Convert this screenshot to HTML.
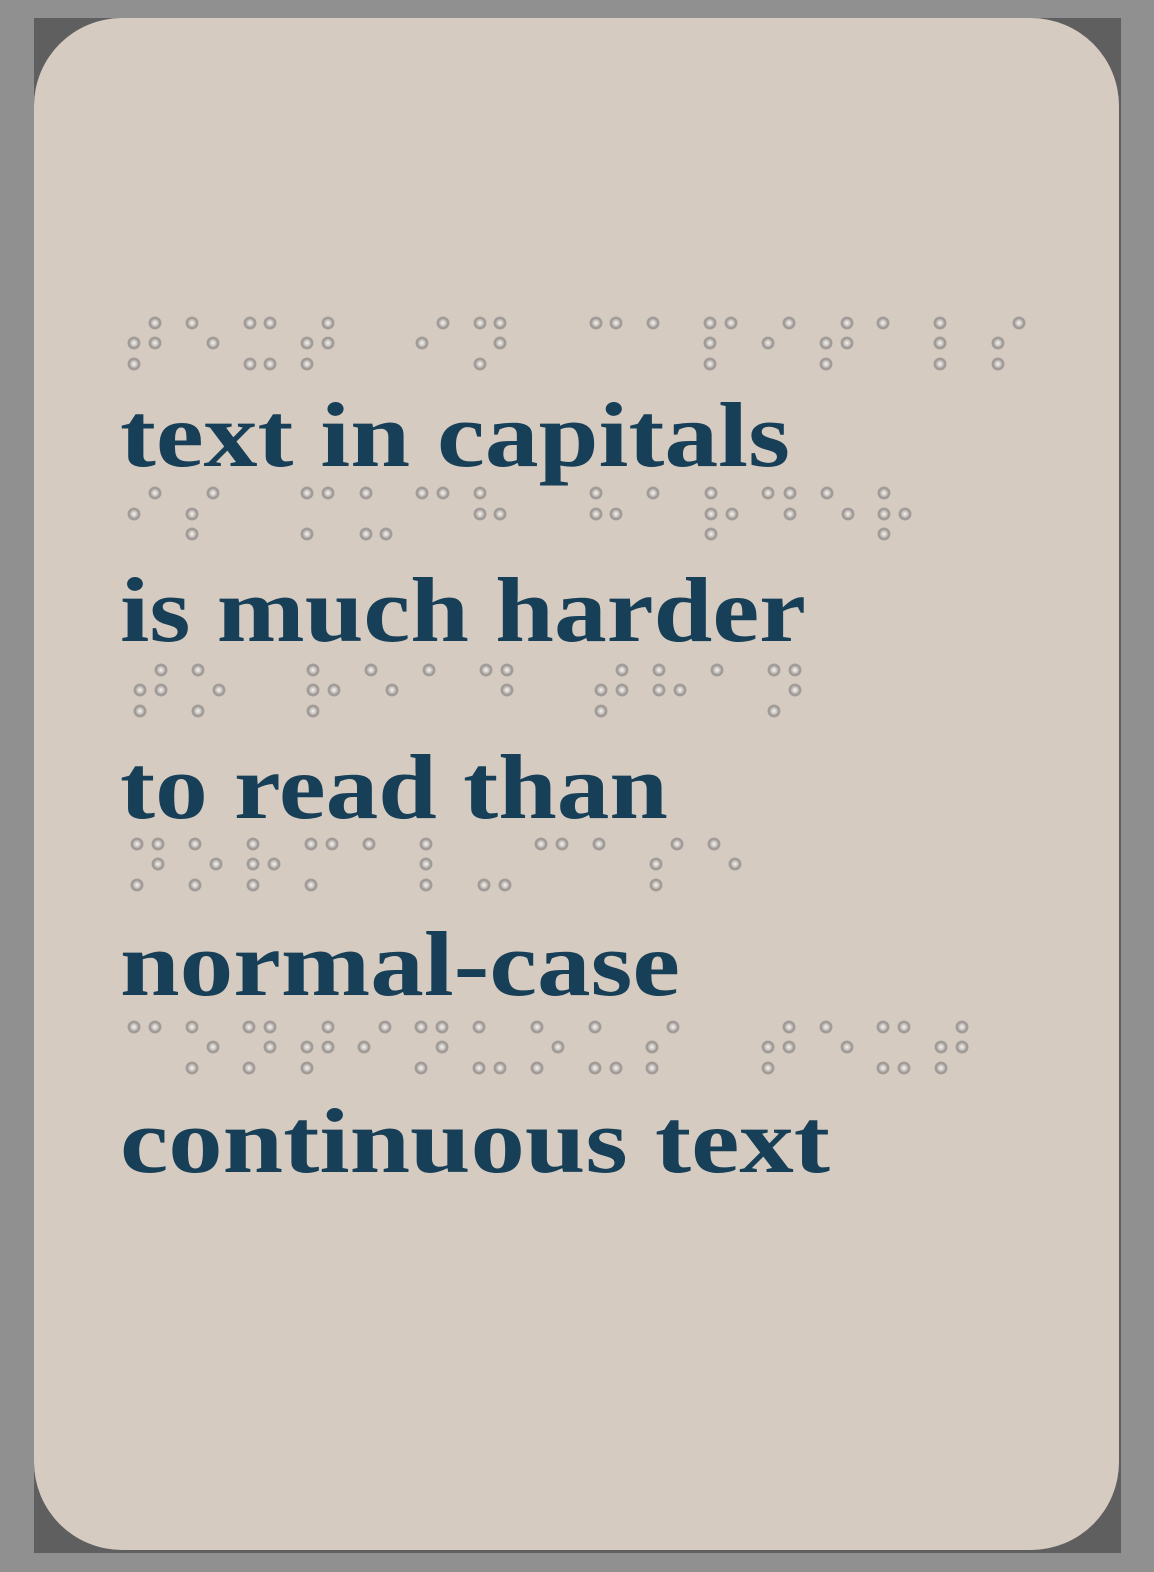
<!DOCTYPE html>
<html><head><meta charset="utf-8"><style>
html,body{margin:0;padding:0;width:1154px;height:1572px;background:#909090;overflow:hidden}
svg{display:block}
</style></head><body>
<svg width="1154" height="1572" viewBox="0 0 1154 1572" xmlns="http://www.w3.org/2000/svg">
<defs>
<radialGradient id="d" cx="0.5" cy="0.5" r="0.5">
<stop offset="0" stop-color="#f6f4f2"/><stop offset="0.45" stop-color="#c9c4bf"/><stop offset="0.75" stop-color="#9a9590"/><stop offset="1" stop-color="#aaa49f"/>
</radialGradient>
<g id="o"><circle r="6.5" fill="url(#d)"/></g>
</defs>
<rect x="34" y="18" width="1087" height="1535" fill="#5f5f5f"/>
<rect x="34" y="18" width="1085" height="1532" rx="88" ry="88" fill="#d6cbc1"/>
<g>
<use href="#o" x="155" y="323"/><use href="#o" x="192" y="323"/><use href="#o" x="213" y="343"/><use href="#o" x="134" y="343"/><use href="#o" x="155" y="343"/><use href="#o" x="134" y="364"/>
<use href="#o" x="250" y="323"/><use href="#o" x="270" y="323"/><use href="#o" x="250" y="364"/><use href="#o" x="270" y="364"/>
<use href="#o" x="328" y="323"/><use href="#o" x="307" y="343"/><use href="#o" x="328" y="343"/><use href="#o" x="307" y="364"/>
<use href="#o" x="443" y="323"/><use href="#o" x="422" y="343"/>
<use href="#o" x="480" y="323"/><use href="#o" x="500" y="323"/><use href="#o" x="500" y="343"/><use href="#o" x="480" y="364"/>
<use href="#o" x="596" y="323"/><use href="#o" x="616" y="323"/><use href="#o" x="653" y="323"/>
<use href="#o" x="710" y="323"/><use href="#o" x="731" y="323"/><use href="#o" x="710" y="343"/><use href="#o" x="710" y="364"/>
<use href="#o" x="789" y="323"/><use href="#o" x="768" y="343"/>
<use href="#o" x="847" y="323"/><use href="#o" x="826" y="343"/><use href="#o" x="847" y="343"/><use href="#o" x="826" y="364"/>
<use href="#o" x="883" y="323"/>
<use href="#o" x="940" y="323"/><use href="#o" x="940" y="343"/><use href="#o" x="940" y="364"/>
<use href="#o" x="1019" y="323"/><use href="#o" x="998" y="343"/><use href="#o" x="998" y="364"/>
<use href="#o" x="155" y="493"/><use href="#o" x="213" y="493"/><use href="#o" x="134" y="514"/><use href="#o" x="192" y="514"/><use href="#o" x="192" y="534"/>
<use href="#o" x="307" y="493"/><use href="#o" x="328" y="493"/><use href="#o" x="366" y="493"/><use href="#o" x="307" y="534"/><use href="#o" x="366" y="534"/><use href="#o" x="386" y="534"/>
<use href="#o" x="422" y="493"/><use href="#o" x="443" y="493"/><use href="#o" x="480" y="493"/><use href="#o" x="480" y="514"/><use href="#o" x="500" y="514"/>
<use href="#o" x="596" y="493"/><use href="#o" x="653" y="493"/><use href="#o" x="596" y="514"/><use href="#o" x="616" y="514"/>
<use href="#o" x="711" y="493"/><use href="#o" x="711" y="514"/><use href="#o" x="732" y="514"/><use href="#o" x="711" y="534"/>
<use href="#o" x="768" y="493"/><use href="#o" x="790" y="493"/><use href="#o" x="790" y="514"/>
<use href="#o" x="827" y="493"/><use href="#o" x="848" y="514"/>
<use href="#o" x="884" y="493"/><use href="#o" x="884" y="514"/><use href="#o" x="905" y="514"/><use href="#o" x="884" y="534"/>
<use href="#o" x="161" y="670"/><use href="#o" x="198" y="670"/><use href="#o" x="140" y="690"/><use href="#o" x="161" y="690"/><use href="#o" x="219" y="690"/><use href="#o" x="140" y="711"/><use href="#o" x="198" y="711"/>
<use href="#o" x="313" y="670"/><use href="#o" x="313" y="690"/><use href="#o" x="334" y="690"/><use href="#o" x="313" y="711"/>
<use href="#o" x="371" y="670"/><use href="#o" x="392" y="690"/><use href="#o" x="429" y="670"/>
<use href="#o" x="486" y="670"/><use href="#o" x="507" y="670"/><use href="#o" x="507" y="690"/>
<use href="#o" x="622" y="670"/><use href="#o" x="601" y="690"/><use href="#o" x="622" y="690"/><use href="#o" x="601" y="711"/>
<use href="#o" x="659" y="670"/><use href="#o" x="659" y="690"/><use href="#o" x="680" y="690"/><use href="#o" x="717" y="670"/>
<use href="#o" x="774" y="670"/><use href="#o" x="795" y="670"/><use href="#o" x="795" y="690"/><use href="#o" x="774" y="711"/>
<use href="#o" x="137" y="844"/><use href="#o" x="158" y="844"/><use href="#o" x="195" y="844"/><use href="#o" x="158" y="864"/><use href="#o" x="137" y="885"/><use href="#o" x="195" y="885"/>
<use href="#o" x="253" y="844"/><use href="#o" x="216" y="864"/><use href="#o" x="253" y="864"/><use href="#o" x="274" y="864"/><use href="#o" x="253" y="885"/>
<use href="#o" x="311" y="844"/><use href="#o" x="332" y="844"/><use href="#o" x="369" y="844"/><use href="#o" x="311" y="885"/>
<use href="#o" x="426" y="844"/><use href="#o" x="426" y="864"/><use href="#o" x="426" y="885"/>
<use href="#o" x="484" y="885"/><use href="#o" x="505" y="885"/>
<use href="#o" x="541" y="844"/><use href="#o" x="562" y="844"/><use href="#o" x="599" y="844"/>
<use href="#o" x="677" y="844"/><use href="#o" x="656" y="864"/><use href="#o" x="656" y="885"/>
<use href="#o" x="714" y="844"/><use href="#o" x="735" y="864"/>
<use href="#o" x="134" y="1027"/><use href="#o" x="155" y="1027"/><use href="#o" x="192" y="1027"/><use href="#o" x="213" y="1047"/><use href="#o" x="192" y="1068"/>
<use href="#o" x="249" y="1027"/><use href="#o" x="270" y="1027"/><use href="#o" x="270" y="1047"/><use href="#o" x="249" y="1068"/>
<use href="#o" x="328" y="1027"/><use href="#o" x="307" y="1047"/><use href="#o" x="328" y="1047"/><use href="#o" x="307" y="1068"/>
<use href="#o" x="364" y="1047"/><use href="#o" x="385" y="1027"/>
<use href="#o" x="421" y="1027"/><use href="#o" x="442" y="1027"/><use href="#o" x="442" y="1047"/><use href="#o" x="421" y="1068"/>
<use href="#o" x="479" y="1027"/><use href="#o" x="479" y="1068"/><use href="#o" x="500" y="1068"/>
<use href="#o" x="537" y="1027"/><use href="#o" x="558" y="1047"/><use href="#o" x="537" y="1068"/>
<use href="#o" x="595" y="1027"/><use href="#o" x="595" y="1068"/><use href="#o" x="616" y="1068"/>
<use href="#o" x="673" y="1027"/><use href="#o" x="652" y="1047"/><use href="#o" x="652" y="1068"/>
<use href="#o" x="789" y="1027"/><use href="#o" x="768" y="1047"/><use href="#o" x="789" y="1047"/><use href="#o" x="768" y="1068"/>
<use href="#o" x="826" y="1027"/><use href="#o" x="847" y="1047"/>
<use href="#o" x="883" y="1027"/><use href="#o" x="904" y="1027"/><use href="#o" x="883" y="1068"/><use href="#o" x="904" y="1068"/>
<use href="#o" x="962" y="1027"/><use href="#o" x="941" y="1047"/><use href="#o" x="962" y="1047"/><use href="#o" x="941" y="1068"/>
</g>
<g font-family="'Liberation Serif', serif" font-weight="bold" font-size="92" fill="#173f57">
<text x="120" y="466" textLength="670" lengthAdjust="spacingAndGlyphs">text in capitals</text>
<text x="120" y="641" textLength="686" lengthAdjust="spacingAndGlyphs">is much harder</text>
<text x="120" y="818" textLength="548" lengthAdjust="spacingAndGlyphs">to read than</text>
<text x="120" y="995" textLength="560" lengthAdjust="spacingAndGlyphs">normal-case</text>
<text x="120" y="1172" textLength="710" lengthAdjust="spacingAndGlyphs">continuous text</text>
</g>
</svg>
</body></html>
